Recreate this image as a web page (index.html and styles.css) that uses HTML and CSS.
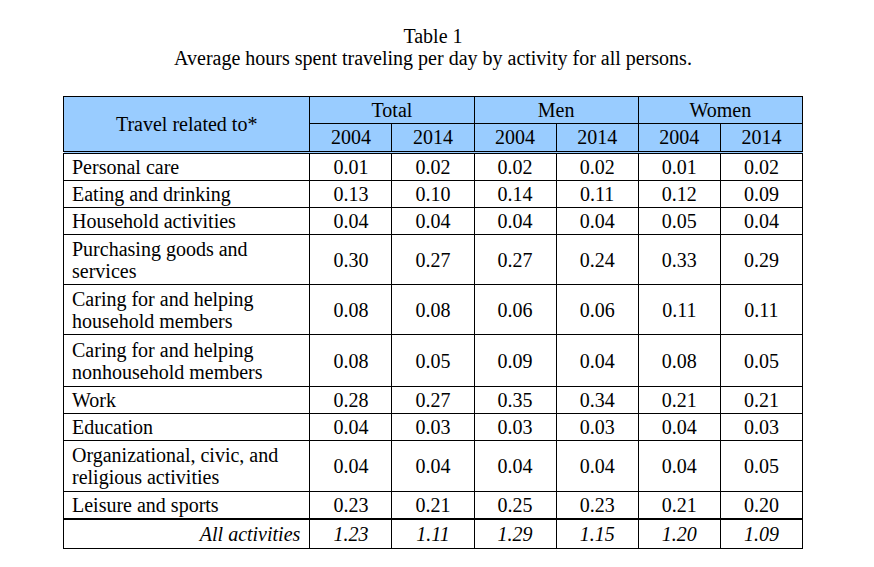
FILE: index.html
```html
<!DOCTYPE html>
<html>
<head>
<meta charset="utf-8">
<link rel="stylesheet" href="styles.css">
</head>
<body>
<div class="page">
  <div class="title">
    <div>Table 1</div>
    <div>Average hours spent traveling per day by activity for all persons.</div>
  </div>
  <table class="data">
    <colgroup>
      <col class="c-label">
      <col class="c-num"><col class="c-num"><col class="c-num"><col class="c-num"><col class="c-num"><col class="c-num">
    </colgroup>
    <thead>
      <tr class="h1">
        <th rowspan="2" class="label-head">Travel related to*</th>
        <th colspan="2">Total</th>
        <th colspan="2">Men</th>
        <th colspan="2">Women</th>
      </tr>
      <tr class="h2">
        <th>2004</th><th>2014</th><th>2004</th><th>2014</th><th>2004</th><th>2014</th>
      </tr>
    </thead>
    <tbody>
      <tr><td class="label">Personal care</td><td>0.01</td><td>0.02</td><td>0.02</td><td>0.02</td><td>0.01</td><td>0.02</td></tr>
      <tr><td class="label">Eating and drinking</td><td>0.13</td><td>0.10</td><td>0.14</td><td>0.11</td><td>0.12</td><td>0.09</td></tr>
      <tr><td class="label">Household activities</td><td>0.04</td><td>0.04</td><td>0.04</td><td>0.04</td><td>0.05</td><td>0.04</td></tr>
      <tr class="two"><td class="label">Purchasing goods and<br>services</td><td>0.30</td><td>0.27</td><td>0.27</td><td>0.24</td><td>0.33</td><td>0.29</td></tr>
      <tr class="two"><td class="label">Caring for and helping<br>household members</td><td>0.08</td><td>0.08</td><td>0.06</td><td>0.06</td><td>0.11</td><td>0.11</td></tr>
      <tr class="two tall"><td class="label">Caring for and helping<br>nonhousehold members</td><td>0.08</td><td>0.05</td><td>0.09</td><td>0.04</td><td>0.08</td><td>0.05</td></tr>
      <tr><td class="label">Work</td><td>0.28</td><td>0.27</td><td>0.35</td><td>0.34</td><td>0.21</td><td>0.21</td></tr>
      <tr><td class="label">Education</td><td>0.04</td><td>0.03</td><td>0.03</td><td>0.03</td><td>0.04</td><td>0.03</td></tr>
      <tr class="two mid"><td class="label">Organizational, civic, and<br>religious activities</td><td>0.04</td><td>0.04</td><td>0.04</td><td>0.04</td><td>0.04</td><td>0.05</td></tr>
      <tr><td class="label">Leisure and sports</td><td>0.23</td><td>0.21</td><td>0.25</td><td>0.23</td><td>0.21</td><td>0.20</td></tr>
      <tr class="total"><td class="label-total">All activities</td><td>1.23</td><td>1.11</td><td>1.29</td><td>1.15</td><td>1.20</td><td>1.09</td></tr>
    </tbody>
  </table>
</div>
</body>
</html>
```

FILE: styles.css
```css
html, body {
  margin: 0;
  padding: 0;
  background: #ffffff;
}

body {
  font-family: "Liberation Serif", "Times New Roman", serif;
  font-size: 20px;
  color: #000;
}

.page {
  padding: 25px 0 0 63px;
  width: 740px;
}

.title {
  text-align: center;
  line-height: 22px;
  margin-bottom: 27px;
}

.data {
  border-collapse: collapse;
  table-layout: fixed;
  width: 740px;
  line-height: 22px;
}

.c-label { width: 246px; }
.c-num { width: 82px; }

.data th,
.data td {
  border: 1px solid #000;
  padding: 2px 4px;
  text-align: center;
  vertical-align: middle;
  font-weight: normal;
}

.data thead th {
  background: #99ccff;
}

.data .h2 th {
  border-bottom: 3px double #000;
  padding-top: 2px;
  padding-bottom: 3px;
}

.data .label-head {
  border-bottom: 3px double #000;
}

.data td.label {
  text-align: left;
  padding-left: 8px;
}

.data tr.two td {
  padding-top: 3px;
  padding-bottom: 2px;
}

.data tr.two.mid td {
  padding-bottom: 3px;
}

.data tr.two.tall td {
  padding-top: 4px;
  padding-bottom: 3px;
}

.data tr.total td {
  border-top: 2px solid #000;
  font-style: italic;
  padding-top: 3px;
  padding-bottom: 3px;
}

.data td.label-total {
  text-align: right;
  padding-right: 9px;
}
```
